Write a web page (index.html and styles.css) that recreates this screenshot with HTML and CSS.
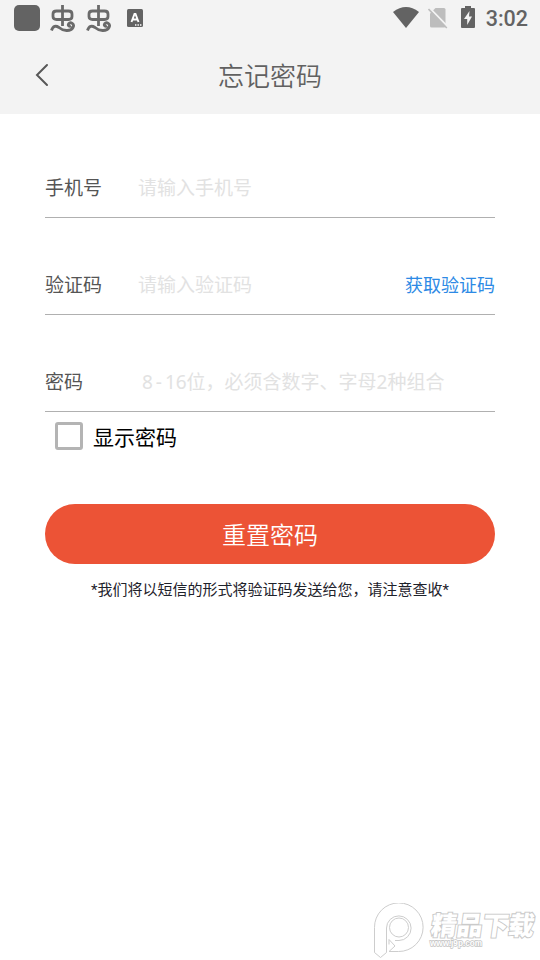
FILE: index.html
```html
<!DOCTYPE html>
<html lang="zh-CN">
<head>
<meta charset="utf-8">
<title>忘记密码</title>
<link rel="stylesheet" href="styles.css">
</head>
<body>
<div class="screen">
  <header class="top">
    <div class="status">
      <div class="notices">
        <span class="app-dot"></span>
        <svg class="bug" width="26" height="28" viewBox="0 0 26 28"><path d="M12.500 0V21M6.500 6H18.500Q22 6 22 9V11.500Q22 14.500 18.500 14.500H6.500Q3 14.500 3 11.500V9Q3 6 6.500 6ZM1.500 25.500C3 20.500 6 20.500 9 22.500C13 26 20.500 27 23 22.500C25 19 20.500 16.500 18.700 18.700C17.500 20.500 19.500 22 21 20.700"/></svg>
        <svg class="bug" width="26" height="28" viewBox="0 0 26 28"><path d="M12.500 0V21M6.500 6H18.500Q22 6 22 9V11.500Q22 14.500 18.500 14.500H6.500Q3 14.500 3 11.500V9Q3 6 6.500 6ZM1.500 25.500C3 20.500 6 20.500 9 22.500C13 26 20.500 27 23 22.500C25 19 20.500 16.500 18.700 18.700C17.500 20.500 19.500 22 21 20.700"/></svg>
        <svg class="lang" width="16" height="18" viewBox="0 0 16 18"><rect width="16" height="18" rx="1.500" fill="#636363"/><path d="M4.500 13L7.500 5H8.500L11.500 13M5.800 10.500H10.200" fill="none" stroke="#fff" stroke-width="1.900"/><path d="M8 16H14.500" stroke="#fff" stroke-width="1.400" stroke-dasharray="1.400 1.100"/></svg>
      </div>
      <div class="system">
        <svg class="wifi" width="26" height="21" viewBox="0 0 26 21"><path d="M0 5Q13-5 26 5L13 21Z" fill="#636363"/></svg>
        <svg class="sim" width="20" height="22" viewBox="0 0 20 22"><path d="M7.500 1H16Q17.500 1 17.500 2.500V19Q17.500 20.500 16 20.500H3.500Q2 20.500 2 19V6.500Z" fill="#bdbdbd"/><path d="M1.500 1L20 20" stroke="#f3f3f3" stroke-width="2"/><path d="M.5 2L18.800 21" stroke="#bdbdbd" stroke-width="1.600"/></svg>
        <svg class="battery" width="14" height="22" viewBox="0 0 14 22"><path d="M4 0H10V2H13Q14 2 14 3V21Q14 22 13 22H1Q0 22 0 21V3Q0 2 1 2H4Z" fill="#636363"/><path d="M8.500 5L3 13H6.200V19L11 10.500H8Z" fill="#f3f3f3"/></svg>
        <span class="time">3:02</span>
      </div>
    </div>
    <div class="nav">
      <svg class="back" width="14" height="24" viewBox="0 0 14 24"><path d="M12 2L2 12L12 22"/></svg>
      <h1 class="title">忘记密码</h1>
    </div>
  </header>
  <main class="form">
    <div class="field"><span class="label">手机号</span><span class="hint">请输入手机号</span></div>
    <div class="field"><span class="label">验证码</span><span class="hint">请输入验证码</span><span class="link">获取验证码</span></div>
    <div class="field"><span class="label">密码</span><span class="hint hint-pw">8<span class="dash">-</span>16位，必须含数字、字母2种组合</span></div>
    <div class="show"><span class="box"></span><span>显示密码</span></div>
    <div class="button">重置密码</div>
    <p class="note"><span class="star">*</span>我们将以短信的形式将验证码发送给您，请注意查收<span class="star">*</span></p>
  </main>
  <svg class="mark" width="166" height="60" viewBox="0 0 166 60">
    <g class="outline">
      <path d="M.5 49.500V24.500A24.300 24.300 0 1 1 24.500 48.500H15L21 43L15 36.500V41.500M.5 49.500L6.500 54.500L12.500 49.500V25A12.300 12.300 0 1 1 25 37.500H21"/>
      <circle cx="25" cy="24.500" r="9.500"/>
    </g>
    <text class="brand" transform="translate(56 32) skewX(-8)" textLength="103" lengthAdjust="spacingAndGlyphs">精品下载</text>
    <text class="site" x="56" y="43" textLength="52" lengthAdjust="spacingAndGlyphs">www.j9p.com</text>
  </svg>
</div>
</body>
</html>
```
FILE: styles.css
```css
* { box-sizing: border-box; }
body { margin: 0; background: #fff; font-family: "Noto Sans", "Noto Sans CJK SC", sans-serif; }
.screen { position: relative; width: 540px; height: 960px; overflow: hidden; }
.top { height: 114px; background: #f3f3f3; }
.status { display: flex; justify-content: space-between; height: 36px; padding: 0 12px 0 14px; }
.notices, .system { display: flex; align-items: center; }
.app-dot { width: 26px; height: 26px; border-radius: 5px; background: #636363; }
.bug { margin-left: 10px; margin-top: 2px; fill: none; stroke: #6a6a6a; stroke-width: 2.8; }
.lang { margin-left: 15px; }
.wifi { margin-top: -1px; }
.sim { margin-left: 9px; }
.battery { margin: -2px 0 0 13px; }
.time { margin-left: 11px; padding-top: 2px; font: 500 21.5px/36px Roboto, sans-serif; color: #636363; }
.nav { display: flex; align-items: center; height: 78px; padding-left: 35px; }
.back { fill: none; stroke: #575757; stroke-width: 2; stroke-linecap: round; }
.title { margin: 2px 0 0 169px; font-size: 26px; line-height: 38px; font-weight: 350; color: #616161; }
.form { padding: 7px 45px 0; }
.field { display: flex; align-items: flex-end; height: 97px; padding-bottom: 15px; border-bottom: 1px solid #b0b0b0; font-size: 19px; line-height: 28px; color: #555; }
.label { width: 93px; }
.hint { color: #e2e2e2; }
.hint-pw { padding-left: 4px; }
.dash { display: inline-block; width: 12px; text-align: center; }
.link { margin-left: auto; font-size: 18px; color: #2d8ae5; }
.show { display: flex; align-items: center; height: 48px; padding-left: 10px; font-size: 21px; color: #000; }
.box { width: 28px; height: 28px; margin-right: 10px; border: 3px solid #b4b4b4; border-radius: 3px; }
.button { height: 60px; margin-top: 44px; border-radius: 30px; background: #ec5336; color: #fff; font-size: 24px; font-weight: 350; line-height: 61px; text-align: center; }
.note { margin: 14px 0 0; font-size: 15px; line-height: 22px; text-align: center; color: #1e222b; }
.star { font-family: Roboto, sans-serif; }
.mark { position: absolute; left: 374px; top: 903px; }
.outline { fill: none; stroke: #cdcdcd; stroke-width: 1; }
.brand { font: 900 26px "Noto Sans CJK SC", sans-serif; fill: #fff; stroke: #cacaca; stroke-width: 2; paint-order: stroke; }
.site { font: bold 9px "Liberation Sans", sans-serif; fill: #fff; stroke: #c4c4c4; stroke-width: 1.5; paint-order: stroke; }
```
